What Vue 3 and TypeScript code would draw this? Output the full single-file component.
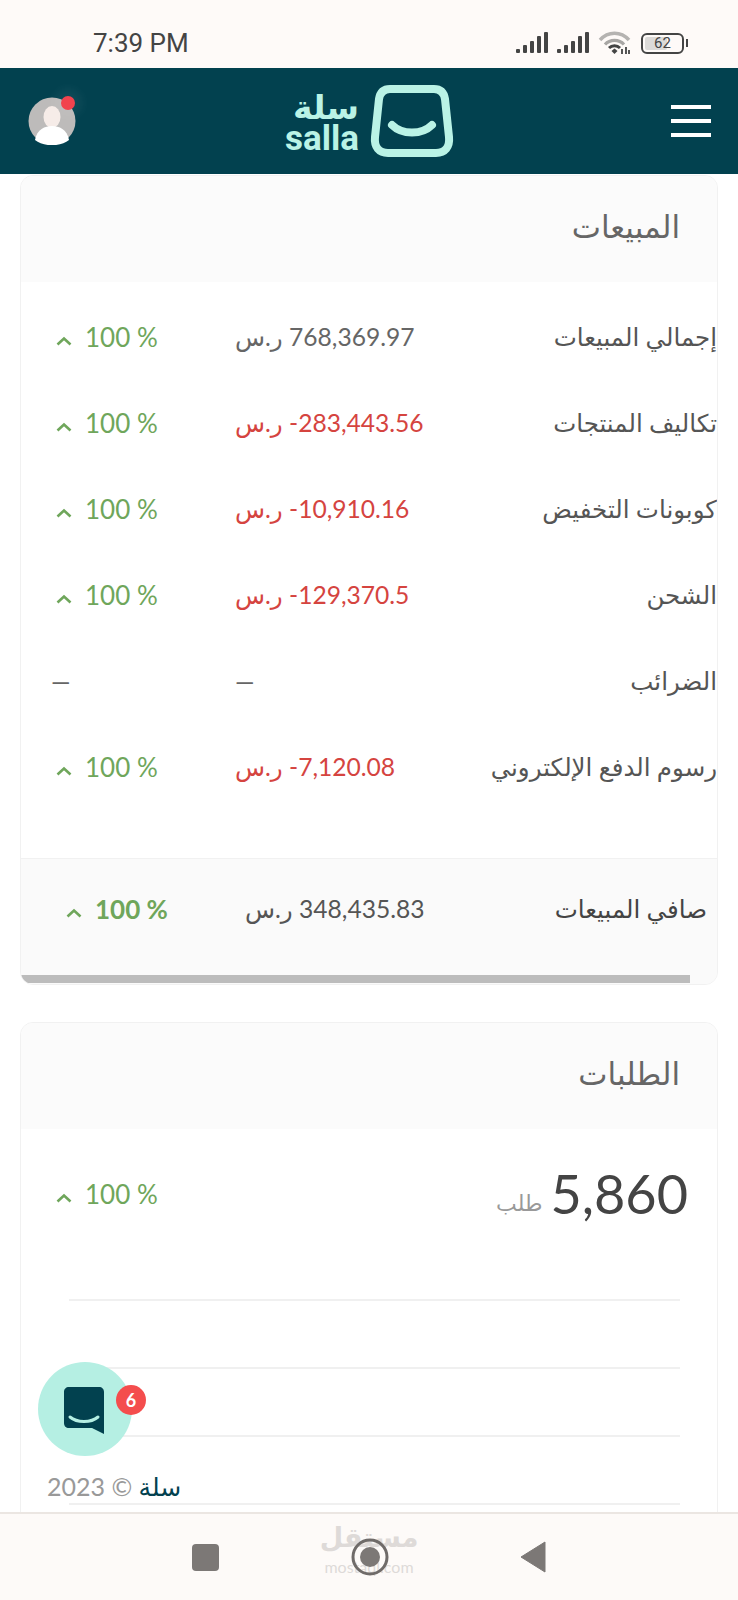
<template>
  <div class="phone">
    <div class="status-bar">
      <span class="clock">7:39 PM</span>
      <div class="status-icons">
        <svg width="33" height="22" viewBox="0 0 33 22" v-for="n in 2" :key="n" class="signal">
          <rect x="0" y="17" width="4" height="4" rx="1" />
          <rect x="7" y="13" width="4" height="8" rx="1" />
          <rect x="14" y="9" width="4" height="12" rx="1" />
          <rect x="21" y="4" width="4" height="17" rx="1" />
          <rect x="28" y="0" width="4" height="21" rx="1" />
        </svg>
        <svg class="wifi" width="33" height="24" viewBox="0 0 33 24">
          <path d="M2 9 C10 0 23 0 31 9" fill="none" stroke="#b5b3b1" stroke-width="3.4" />
          <path d="M7 13.5 C12 8 21 8 26 13.5" fill="none" stroke="#a8a6a4" stroke-width="3.2" />
          <path d="M11 17 C14 14 19 14 22 17" fill="none" stroke="#444" stroke-width="3" />
          <path d="M13.5 20 L16.5 17.5 L19.5 20 L16.5 23 Z" fill="#444" />
          <path d="M24 23V18M28 23V16M31 23V19" stroke="#444" stroke-width="1.8" />
        </svg>
        <div class="battery">
          <div class="battery-fill"></div>
          <span class="battery-text">62</span>
        </div>
        <div class="battery-tip"></div>
      </div>
    </div>

    <header class="topbar">
      <div class="avatar-wrap">
        <svg class="avatar" width="48" height="48" viewBox="0 0 48 48">
          <circle cx="24" cy="24" r="23.5" fill="#bdbbba" />
          <ellipse cx="24" cy="20" rx="8.5" ry="11" fill="#f6ece8" />
          <path d="M7 43 C9 32 17 29 24 29 C31 29 39 32 41 43 C33 50 15 50 7 43 Z" fill="#fff" />
        </svg>
        <span class="avatar-dot"></span>
      </div>
      <div class="logo">
        <div class="logo-words">
          <span class="logo-ar">سلة</span>
          <span class="logo-en">salla</span>
        </div>
        <svg width="84" height="72" viewBox="0 0 84 72">
          <path d="M20 4 H64 C71 4 74 8 75 14 L79 52 C80 62 75 68 66 68 H18 C9 68 4 62 5 52 L9 14 C10 8 13 4 20 4 Z"
            fill="none" stroke="#baf3e6" stroke-width="8" />
          <path d="M22 40 C32 50 52 50 62 40" fill="none" stroke="#baf3e6" stroke-width="8" stroke-linecap="round" />
        </svg>
      </div>
      <div class="burger"><span></span><span></span><span></span></div>
    </header>

    <main class="content" dir="rtl">
      <section class="card sales-card">
        <div class="card-head">المبيعات</div>
        <div class="rows">
          <div class="row" v-for="row in rows" :key="row.label">
            <span class="label">{{ row.label }}</span>
            <span class="value" :class="{ negative: row.negative }">
              <template v-if="row.value"><bdi dir="ltr">{{ row.value }}</bdi> ر.س</template>
              <template v-else>—</template>
            </span>
            <span class="change" v-if="row.value">
              <bdi dir="ltr">100 %</bdi>
              <svg class="chevron" width="16" height="10" viewBox="0 0 16 10"><path d="M1.5 8.5 L8 2.5 L14.5 8.5" /></svg>
            </span>
            <span class="value" v-else>—</span>
          </div>
        </div>
        <div class="row net-row">
          <span class="label">صافي المبيعات</span>
          <span class="value"><bdi dir="ltr">348,435.83</bdi> ر.س</span>
          <span class="change">
            <bdi dir="ltr">100 %</bdi>
            <svg class="chevron" width="16" height="10" viewBox="0 0 16 10"><path d="M1.5 8.5 L8 2.5 L14.5 8.5" /></svg>
          </span>
        </div>
        <div class="scroll-track"><div class="scroll-thumb"></div></div>
      </section>

      <section class="card orders-card">
        <div class="card-head">الطلبات</div>
        <div class="stat">
          <div class="stat-main">
            <span class="stat-num">5,860</span>
            <span class="stat-unit">طلب</span>
          </div>
          <span class="change">
            <bdi dir="ltr">100 %</bdi>
            <svg class="chevron" width="16" height="10" viewBox="0 0 16 10"><path d="M1.5 8.5 L8 2.5 L14.5 8.5" /></svg>
          </span>
        </div>
        <div class="chart">
          <div class="grid-line" v-for="n in 4" :key="n"></div>
        </div>
      </section>

      <div class="copyright">سلة<span class="copy-rest"> © <bdi dir="ltr">2023</bdi></span></div>

      <div class="chat-btn">
        <svg width="44" height="50" viewBox="0 0 44 50">
          <path d="M6 1 H36 C39 1 41 3 41 6 V48 L29 42 H6 C3 42 1 40 1 37 V6 C1 3 3 1 6 1 Z" fill="#02414f" />
          <path d="M7 31 C14 37 28 37 35 31" fill="none" stroke="#b5efe3" stroke-width="3" stroke-linecap="round" />
        </svg>
        <span class="chat-badge">6</span>
      </div>
    </main>

    <nav class="navbar">
      <div class="watermark">
        <span class="wm-ar">مستقل</span>
        <span class="wm-en">mostaql.com</span>
      </div>
      <span class="nav-square"></span>
      <svg class="nav-home" width="38" height="38" viewBox="0 0 38 38">
        <circle cx="19" cy="19" r="17" fill="none" stroke="#6f6b69" stroke-width="3" />
        <circle cx="19" cy="19" r="10" fill="#7c7876" />
      </svg>
      <svg width="26" height="32" viewBox="0 0 26 32">
        <path d="M25 1 V31 L1 16 Z" fill="#7c7876" stroke="#7c7876" stroke-linejoin="round" stroke-width="1" />
      </svg>
    </nav>
  </div>
</template>

<script setup lang="ts">
interface SalesRow {
  label: string;
  value: string;
  negative?: boolean;
}

const rows: SalesRow[] = [
  { label: 'إجمالي المبيعات', value: '768,369.97' },
  { label: 'تكاليف المنتجات', value: '-283,443.56', negative: true },
  { label: 'كوبونات التخفيض', value: '-10,910.16', negative: true },
  { label: 'الشحن', value: '-129,370.5', negative: true },
  { label: 'الضرائب', value: '' },
  { label: 'رسوم الدفع الإلكتروني', value: '-7,120.08', negative: true },
];
</script>

<style>
html,
body {
  margin: 0;
  background: #fff;
}
</style>

<style scoped>
.phone {
  width: 738px;
  height: 1600px;
  display: flex;
  flex-direction: column;
  overflow: hidden;
  background: #fff;
  font-family: Lato, "DejaVu Sans", sans-serif;
  color: #555;
}

.status-bar {
  height: 68px;
  flex: none;
  box-sizing: border-box;
  padding: 18px 50px 0 93px;
  display: flex;
  justify-content: space-between;
  align-items: center;
  background: #fefaf8;
}

.clock {
  font-family: Roboto, sans-serif;
  font-size: 26px;
  color: #444;
}

.status-icons {
  display: flex;
  align-items: center;
}

.signal {
  fill: #444;
  margin-right: 8px;
}

.wifi {
  margin-right: 10px;
}

.battery {
  position: relative;
  box-sizing: border-box;
  width: 43px;
  height: 21px;
  border: 2px solid #444;
  border-radius: 6px;
  padding: 2px;
}

.battery-fill {
  width: 62%;
  height: 100%;
  background: #dcdad8;
  border-radius: 2px;
}

.battery-text {
  position: absolute;
  inset: 0;
  text-align: center;
  font-family: Roboto, sans-serif;
  font-size: 15px;
  line-height: 17px;
  color: #444;
}

.battery-tip {
  width: 2px;
  height: 8px;
  margin-left: 2px;
  background: #444;
}

.topbar {
  height: 106px;
  flex: none;
  box-sizing: border-box;
  padding: 0 27px 0 28px;
  display: grid;
  grid-template-columns: 1fr auto 1fr;
  align-items: center;
  background: #02414f;
}

.avatar-wrap {
  position: relative;
  width: 48px;
  height: 48px;
}

.avatar {
  display: block;
}

.avatar-dot {
  position: absolute;
  top: -1px;
  right: 1px;
  width: 14px;
  height: 14px;
  border-radius: 50%;
  background: #f2434e;
  box-shadow: 0 0 10px 8px rgba(255, 255, 255, 0.05);
}

.logo {
  display: flex;
  align-items: center;
  gap: 11px;
}

.logo-words {
  display: flex;
  flex-direction: column;
  align-items: flex-end;
  color: #baf3e6;
  font-weight: 700;
}

.logo-ar {
  display: block;
  font-size: 33px;
  line-height: 36px;
}

.logo-en {
  display: block;
  font-family: Roboto, sans-serif;
  font-size: 35px;
  line-height: 30px;
}

.burger {
  justify-self: end;
  display: flex;
  flex-direction: column;
  gap: 10px;
}

.burger span {
  display: block;
  width: 40px;
  height: 4px;
  background: #fff;
}

.content {
  position: relative;
  flex: 1;
  min-height: 0;
  overflow: hidden;
  padding: 1px 20px 0;
}

.card {
  border: 1px solid #f1f1f1;
  border-radius: 13px;
  overflow: hidden;
}

.card-head {
  height: 106px;
  box-sizing: border-box;
  padding: 30px 37px 0 0;
  background: #fbfbfb;
  font-size: 31px;
  line-height: 40px;
  color: #666;
}

.rows {
  padding: 12px 0 48px;
}

.row {
  display: grid;
  grid-template-columns: 1fr 184px 214px;
  align-items: center;
  height: 86px;
  font-size: 24.6px;
}

.label {
  font-size: 24.5px;
  color: #555;
  white-space: nowrap;
}

.value {
  justify-self: end;
  color: #666;
  white-space: nowrap;
}

.value.negative {
  color: #d5443f;
}

.change {
  justify-self: end;
  display: flex;
  align-items: center;
  gap: 13px;
  padding-left: 35px;
  font-size: 26px;
  color: #6fa65b;
  white-space: nowrap;
}

.row > .value:last-child {
  padding-left: 30px;
}

.chevron {
  margin-top: 8px;
  fill: none;
  stroke: #6fa65b;
  stroke-width: 2.6;
}

.net-row {
  height: 117px;
  box-sizing: border-box;
  padding: 0 10px 16px;
  background: #fafafa;
  border-top: 1px solid #f1f1f1;
}

.net-row .label {
  color: #444;
}

.net-row .value {
  color: #555;
}

.net-row .change {
  font-weight: 700;
}

.scroll-track {
  height: 9px;
  background: #fafafa;
}

.scroll-thumb {
  width: 669px;
  height: 8px;
  margin-right: auto;
  background: #bcbcbc;
}

.orders-card {
  margin-top: 37px;
  height: 600px;
}

.stat {
  display: flex;
  justify-content: space-between;
  align-items: center;
  height: 90px;
  margin-top: 20px;
  font-size: 24px;
}

.stat-main {
  display: flex;
  align-items: flex-end;
  gap: 8px;
  padding-right: 29px;
}

.stat-num {
  font-size: 54px;
  line-height: 64px;
  color: #444;
}

.stat-unit {
  font-size: 22px;
  line-height: 46px;
  color: #999;
}

.chart {
  margin: 60px 37px 0 48px;
  display: flex;
  flex-direction: column;
  gap: 66px;
}

.grid-line {
  height: 2px;
  background: #f0f0f0;
}

.copyright {
  position: absolute;
  left: 47px;
  bottom: 10px;
  font-size: 25px;
  color: #02414f;
}

.copy-rest {
  color: #999;
}

.chat-btn {
  position: absolute;
  left: 38px;
  bottom: 56px;
  width: 94px;
  height: 94px;
  display: flex;
  align-items: center;
  justify-content: center;
  border-radius: 50%;
  background: #b5efe3;
}

.chat-btn svg {
  margin-top: 4px;
}

.chat-badge {
  position: absolute;
  top: 23px;
  right: -14px;
  width: 30px;
  height: 30px;
  border-radius: 50%;
  background: #f44d4d;
  color: #fff;
  font-size: 18px;
  font-weight: 700;
  line-height: 30px;
  text-align: center;
}

.navbar {
  position: relative;
  height: 88px;
  flex: none;
  box-sizing: border-box;
  padding: 0 192px;
  display: flex;
  align-items: center;
  justify-content: space-between;
  border-top: 2px solid #ebe6e2;
  background: #fdfaf8;
}

.watermark {
  position: absolute;
  left: 323px;
  top: 3px;
  width: 92px;
  display: flex;
  flex-direction: column;
  align-items: center;
  color: #dedad8;
}

.wm-ar {
  font-size: 27px;
  font-weight: 700;
  line-height: 40px;
}

.wm-en {
  font-size: 16px;
  line-height: 16px;
  margin-top: 2px;
}

.nav-square {
  width: 27px;
  height: 27px;
  border-radius: 4px;
  background: #7c7876;
}

.nav-home {
  position: relative;
}
</style>
